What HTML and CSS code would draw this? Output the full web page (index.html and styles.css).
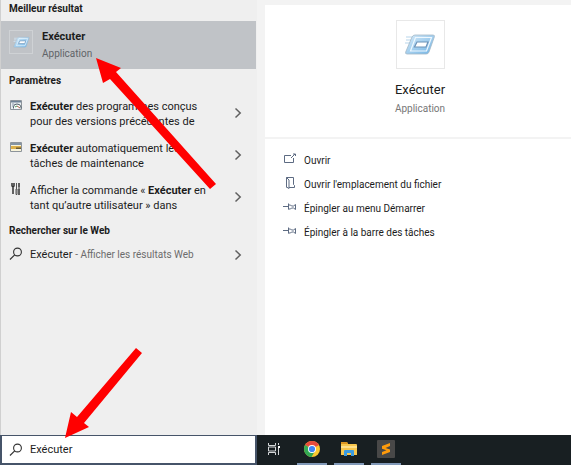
FILE: index.html
```html
<!DOCTYPE html>
<html lang="fr">
<head>
<meta charset="utf-8">
<title>Recherche</title>
<link rel="stylesheet" href="styles.css">
</head>
<body>
<svg class="defs" aria-hidden="true">
  <defs>
    <linearGradient id="blue" x1="0" y1="0" x2="1" y2="1"><stop offset="0" stop-color="#d8ecf9"/><stop offset="1" stop-color="#6fb2e4"/></linearGradient>
    <symbol id="run" viewBox="0 0 32 24">
      <path d="M2 4h9M2 7h8M1 10h8" stroke="#cfe3f2" stroke-width="1.500"/>
      <path d="M11 2h18q2 0 1.300 2l-5.300 15q-.7 2-2.700 2H3q-2 0-1.300-2L8 4Q9 2 11 2z" fill="url(#blue)" stroke="#a3b7c7" stroke-width=".8"/>
      <path d="M11.500 4.500h16L22.500 18H6.500z" fill="none" stroke="#eef8ff" stroke-width="1.200"/>
      <path d="M13 9h11l-2 5H10.500z" fill="#fff" stroke="#6d93b8" stroke-width="1.200"/>
    </symbol>
    <symbol id="chevron" viewBox="0 0 8 12"><path d="M1.500 1.500L6.200 6l-4.700 4.500" fill="none" stroke="#606060" stroke-width="1.500"/></symbol>
    <symbol id="search" viewBox="0 0 14 14"><circle cx="8.500" cy="5" r="3.900" fill="none" stroke="#333" stroke-width="1.100"/><path d="M5.700 7.900L1 12.500" stroke="#333" stroke-width="1.200"/></symbol>
    <symbol id="pin" viewBox="0 0 14 14"><path d="M0 6.500h5M5.500 3.500v6M5.500 5h2l1 1h2l2-1.500v5l-2-1.500h-2l-1 1h-2" fill="none" stroke="#5d6b82"/></symbol>
  </defs>
</svg>
<div class="screen">
  <main class="panels">
    <section class="results">
      <h2 class="heading first">Meilleur résultat</h2>
      <a class="best" href="#details">
        <span class="tile"><svg width="17" height="13"><use href="#run"/></svg></span>
        <span class="best-text"><b>Exécuter</b><small>Application</small></span>
      </a>
      <h2 class="heading">Paramètres</h2>
      <a class="result" href="#r1">
        <svg class="icon" width="12" height="12" viewBox="0 0 12 12"><path d="M.5 1.500h11v9H.5z" fill="#e9edf0" stroke="#8d949b"/><path d="M1 2h10v1.500H1z" fill="#6f8296"/><path d="M2 5h2M2 7h1" stroke="#8a9aaa"/><path d="M3.500 9.500V8q0-3 3.500-3t4 3v1.500" fill="#fff" stroke="#4f5f68"/><path d="M5 8l2-1" stroke="#479958"/><path d="M7 7l3 2" stroke="#a75f48"/></svg>
        <span class="label"><b>Exécuter</b> des programmes conçus<br>pour des versions précédentes de</span>
        <svg class="chevron" width="8" height="12"><use href="#chevron"/></svg>
      </a>
      <a class="result" href="#r2">
        <svg class="icon" width="12" height="12" viewBox="0 0 12 12"><path d="M.5 1.500h11v9H.5z" fill="#f8f4dc" stroke="#8d949b"/><path d="M1 2h10v2H1z" fill="#8494a4"/><path d="M1 5h10v3H1z" fill="#dcb04a"/><path d="M6 6.500h5V8H6z" fill="#6b5b38"/></svg>
        <span class="label"><b>Exécuter</b> automatiquement les<br>tâches de maintenance</span>
        <svg class="chevron" width="8" height="12"><use href="#chevron"/></svg>
      </a>
      <a class="result" href="#r3">
        <svg class="icon" width="12" height="12" viewBox="0 0 12 12"><path d="M2 0v3l1 1 1-1V0M3 4v7" fill="none" stroke="#333" stroke-width="1.500"/><path d="M6.500 0v6M6 6h1v5.500H6z" fill="none" stroke="#555"/><path d="M9 0v4M9 6v6" stroke="#333" stroke-width="1.500"/><path d="M8 5h2" stroke="#333"/></svg>
        <span class="label">Afficher la commande « <b>Exécuter</b> en<br>tant qu’autre utilisateur » dans</span>
        <svg class="chevron" width="8" height="12"><use href="#chevron"/></svg>
      </a>
      <h2 class="heading">Rechercher sur le Web</h2>
      <a class="result web" href="#web">
        <svg class="icon" width="14" height="14"><use href="#search"/></svg>
        <span class="label">Exécuter <small>- Afficher les résultats Web</small></span>
        <svg class="chevron" width="8" height="12"><use href="#chevron"/></svg>
      </a>
    </section>
    <section class="details" id="details">
      <header class="app">
        <span class="tile large"><svg width="32" height="24"><use href="#run"/></svg></span>
        <h1>Exécuter</h1>
        <p>Application</p>
      </header>
      <div class="actions">
        <button><svg width="14" height="14" viewBox="0 0 14 14"><path d="M8 3.500H1.500v7h9V6M8 6l4-4M10 2h2.500v2" fill="none" stroke="#5d6b82"/></svg>Ouvrir</button>
        <button><svg width="14" height="14" viewBox="0 0 14 14"><path d="M3.500 11.500V1.500h7v7l1 1v2H6M3.500 1.500L6 4v8.500L3.500 11" fill="none" stroke="#5d6b82"/></svg>Ouvrir l'emplacement du fichier</button>
        <button><svg width="14" height="14"><use href="#pin"/></svg>Épingler au menu Démarrer</button>
        <button><svg width="14" height="14"><use href="#pin"/></svg>Épingler à la barre des tâches</button>
      </div>
    </section>
  </main>
  <footer class="taskbar">
    <label class="search"><svg width="14" height="14"><use href="#search"/></svg><input type="text" value="Exécuter" aria-label="Rechercher"></label>
    <nav class="apps">
      <button class="task" aria-label="Affichage des tâches"><svg width="14" height="12" viewBox="0 0 14 12"><path d="M1.500 0v2.500h7V0M1.500 12V9.500h7V12M1.500 4h7v4h-7zM11.500 0v2M11.500 5v7" fill="none" stroke="#d5d8da"/><path d="M11 3h2v2h-2z" fill="#fff"/></svg></button>
      <button class="task open" aria-label="Chrome"><svg width="18" height="18" viewBox="0 0 18 18"><circle cx="9" cy="9" r="8" fill="#fbc831"/><path d="M9 9L2.100 5A8 8 0 0 1 16 5z" fill="#e84b3c"/><path d="M9 9L2.100 5A8 8 0 0 0 8.500 17l3.500-6z" fill="#32a853"/><circle cx="9" cy="9" r="4" fill="#fff"/><circle cx="9" cy="9" r="3.100" fill="#4285f4"/></svg></button>
      <button class="task open" aria-label="Explorateur de fichiers"><svg width="18" height="18" viewBox="0 0 18 18"><path d="M1 2h6l1 2h8q1 0 1 1v10H1z" fill="#f7c64d"/><path d="M1 2h6l1 2H1z" fill="#dc9620"/><path d="M1 6h16v2H1z" fill="#ffe08a"/><path d="M4 16v-5q0-1 1-1h8q1 0 1 1v5h-3v-3H7v3z" fill="#3a9ae1"/></svg></button>
      <button class="task open" aria-label="Sublime Text"><svg width="18" height="18" viewBox="0 0 18 18"><rect width="18" height="18" rx="1" fill="#484848"/><path d="M5 6l8-3v3L8.500 8 13 9.500V12l-8 3v-3l4.500-1.800L5 8.800z" fill="#ff9b0b"/></svg></button>
    </nav>
  </footer>
  <svg class="arrows" width="220" height="440" viewBox="0 0 220 440" aria-hidden="true">
    <path d="M96 58l25 10-5 4 100 112-6 5L110 79l-7 4z"/>
    <path d="M65 438l6-26 6 5 59-69 6 5-58 70 5 4z"/>
  </svg>
</div>
</body>
</html>
```

FILE: styles.css
```css
* { box-sizing: border-box; }
body { margin: 0; font-family: Roboto, "Noto Sans", sans-serif; font-size: 11px; color: #1c1c1c; }
.defs { position: absolute; width: 0; height: 0; }
h1, h2, p { margin: 0; font-weight: 400; }
b { font-weight: 700; }
a { color: inherit; text-decoration: none; }
svg { display: block; flex: none; }
button, input { font: inherit; color: inherit; border: 0; background: none; padding: 0; }
.screen { position: relative; display: flex; flex-direction: column; min-height: 100vh; }
.panels { flex: 1; display: grid; grid-template-columns: 257px 1fr; background: #f3f3f3; }
.results { background: #efefef; border-left: 1px solid #d0d0d0; }
.heading { padding-left: 8px; font-size: 10px; font-weight: 700; line-height: 24px; }
.first { line-height: 18px; padding-bottom: 3px; }
.best { display: flex; gap: 9px; height: 48px; padding: 9px 8px 0; margin-right: 1px; background: #c0c3c7; }
.tile { display: grid; place-items: center; width: 24px; height: 24px; border: 1px solid #cfd2d5; }
.best-text { display: flex; flex-direction: column; line-height: 15px; }
.best-text small { font-size: 10px; line-height: 20px; color: #606368; }
.best-text b { line-height: 14px; }
.result { display: flex; height: 42px; padding: 6px 15px 0 8px; line-height: 15px; white-space: nowrap; }
.icon { width: 14px; margin-right: 7px; }
.label { flex: 1; }
.label small { font-size: 10px; color: #6c6c6c; }
.chevron { margin-top: 8px; }
.web { height: 24px; padding-top: 4px; }
.web .chevron { margin-top: 2px; }
.details { margin: 5px 0 0 8px; background: #fff; }
.app { display: flex; flex-direction: column; align-items: center; padding: 15px 0 19px 4px; border-bottom: 2px solid #f3f3f3; }
.large { width: 49px; height: 49px; border-color: #e8e8e8; }
.app h1 { font-size: 13px; line-height: 20px; margin-top: 11px; }
.app p { font-size: 10px; line-height: 18px; color: #777; }
.actions { padding: 9px 18px; }
.actions button { display: flex; align-items: center; gap: 7px; width: 100%; height: 24px; font-size: 10px; text-align: left; }
.actions svg { margin-bottom: 3px; }
.taskbar { display: flex; height: 30px; background: #181f22; }
.search { display: flex; align-items: center; gap: 7px; width: 257px; padding-left: 7px; border: 2px solid #465469; border-top-width: 1px; background: #fff; }
.search input { flex: 1; min-width: 0; height: 24px; outline: 0; }
.apps { display: flex; gap: 7px; padding-left: 2px; }
.task { display: grid; place-items: center; width: 30px; height: 30px; border-bottom: 2px solid transparent; }
.task:first-child { margin-right: 1px; }
.open { border-bottom-color: #8199b8; }
.arrows { position: absolute; top: 0; left: 0; fill: #f00; pointer-events: none; }
```
